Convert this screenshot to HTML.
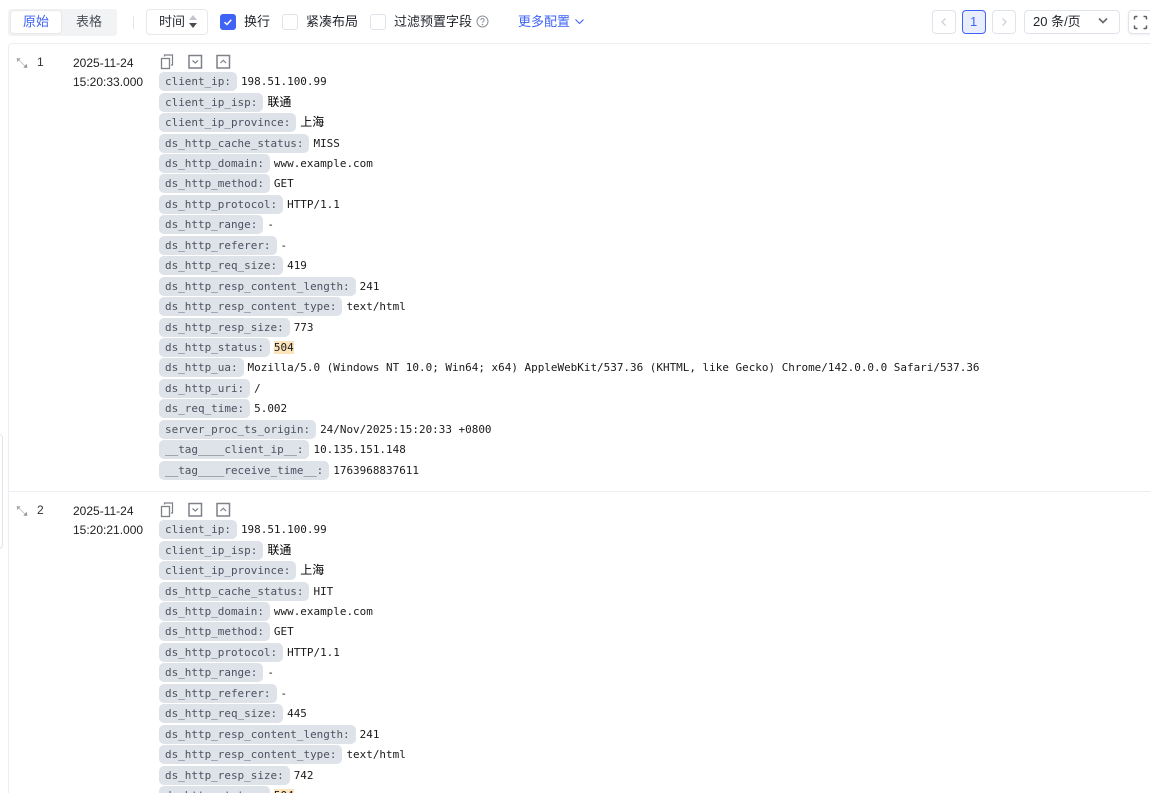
<!DOCTYPE html>
<html><head><meta charset="utf-8">
<style>
html,body{margin:0;padding:0;width:1150px;height:793px;overflow:hidden;background:#fff}
#w{position:relative;width:1150px;height:793px;overflow:hidden;background:#fff;font-family:"Liberation Sans","Noto Sans CJK SC",sans-serif;color:#1f2329;font-size:13px}
.a{position:absolute}
.t{position:absolute;white-space:nowrap;line-height:18px}
.box{position:absolute;box-sizing:border-box;border:1px solid #dfe3ea;border-radius:3px;background:#fff}
.rec{position:absolute;left:159px;font-family:"DejaVu Sans Mono","Noto Sans CJK SC",monospace;font-size:10.96px;color:#1a1a1a}
.l{height:20.45px;white-space:nowrap;line-height:19px}
.c{display:inline-block;height:19px;line-height:19px;padding:0 6px;margin-right:4px;background:#dee2e9;border-radius:5px;color:#4a5361}
.z{font-family:"WenQuanYi Zen Hei","Noto Sans CJK SC",sans-serif;font-size:12px;line-height:0;color:#000}
.h{background:#fbe3bb}
.d{position:absolute;left:73px;font-size:12px;line-height:19px;color:#222;white-space:nowrap}
</style></head><body><div id="w">

<div class="a" style="left:8px;top:9px;width:109px;height:27px;background:#f2f3f5;border-radius:3px"></div>
<div class="a" style="left:11px;top:11px;width:50px;height:22px;background:#fff;border-radius:3px;box-shadow:0 0 2px rgba(0,0,0,.12)"></div>
<div class="t" style="left:23px;top:13px;color:#3f63f5">原始</div>
<div class="t" style="left:76px;top:13px;color:#4a4f57">表格</div>
<div class="a" style="left:133px;top:16px;width:1px;height:13px;background:#e4e6ea"></div>
<div class="box" style="left:146px;top:9px;width:62px;height:26px;border-radius:4px;border-color:#e6e8ec"></div>
<div class="t" style="left:159px;top:13px;color:#2b2f36">时间</div>
<svg class="a" style="left:188px;top:14px" width="10" height="16"><path d="M5 1 9 6H1z" fill="#c2c5cb"/><path d="M5 14 9 9H1z" fill="#4a4d52"/></svg>
<div class="a" style="left:220px;top:14px;width:16px;height:16px;background:#3f63f5;border-radius:3px"></div>
<svg class="a" style="left:220px;top:14px" width="16" height="16"><path d="M4.5 8.2 7 10.5 11.3 5.8" fill="none" stroke="#fff" stroke-width="1.5"/></svg>
<div class="t" style="left:244px;top:13px">换行</div>
<div class="box" style="left:282px;top:14px;width:16px;height:16px"></div>
<div class="t" style="left:306px;top:13px">紧凑布局</div>
<div class="box" style="left:370px;top:14px;width:16px;height:16px"></div>
<div class="t" style="left:394px;top:13px">过滤预置字段</div>
<svg class="a" style="left:476px;top:15px" width="13" height="13"><circle cx="6.5" cy="6.5" r="5.5" fill="none" stroke="#8d9199"/><path d="M4.8 5.2C4.9 3 8.2 3 8.2 5.1 8.2 6.3 6.5 6.4 6.5 7.8" fill="none" stroke="#8d9199"/><circle cx="6.5" cy="9.6" r=".7" fill="#8d9199"/></svg>
<div class="t" style="left:518px;top:13px;color:#3f63f5">更多配置</div>
<svg class="a" style="left:574px;top:18px" width="11" height="8"><path d="M1.5 1.5 5.5 5.5 9.5 1.5" fill="none" stroke="#3f63f5" stroke-width="1.1"/></svg>

<div class="box" style="left:932px;top:10px;width:24px;height:24px;border-radius:4px"></div>
<svg class="a" style="left:940px;top:17px" width="8" height="10"><path d="M5.5 1.5 2 5 5.5 8.5" fill="none" stroke="#c8ccd3" stroke-width="1.2"/></svg>
<div class="box" style="left:962px;top:10px;width:24px;height:24px;border-radius:4px;border-color:#3f63f5;background:#e9eefe"></div>
<div class="t" style="left:970px;top:13px;color:#3f63f5">1</div>
<div class="box" style="left:992px;top:10px;width:24px;height:24px;border-radius:4px"></div>
<svg class="a" style="left:1000px;top:17px" width="8" height="10"><path d="M2.5 1.5 6 5 2.5 8.5" fill="none" stroke="#c8ccd3" stroke-width="1.2"/></svg>
<div class="box" style="left:1024px;top:10px;width:96px;height:24px;border-radius:4px"></div>
<div class="t" style="left:1033px;top:13px">20 条/页</div>
<svg class="a" style="left:1097px;top:17px" width="12" height="8"><path d="M2 1.5 6 5.5 10 1.5" fill="none" stroke="#6a6e75" stroke-width="1.8"/></svg>
<div class="box" style="left:1128px;top:10px;width:30px;height:24px;border-radius:4px;box-shadow:0 1px 2px rgba(0,0,0,.06)"></div>
<svg class="a" style="left:1133px;top:15px" width="15" height="15"><path d="M1.5 4.5V2.5Q1.5 1.5 2.5 1.5H4.5M10.5 1.5H12.5Q13.5 1.5 13.5 2.5V4.5M13.5 10.5V12.5Q13.5 13.5 12.5 13.5H10.5M4.5 13.5H2.5Q1.5 13.5 1.5 12.5V10.5" fill="none" stroke="#5c6066" stroke-width="1.5"/></svg>

<div class="a" style="left:8px;top:43px;width:1160px;height:770px;box-sizing:border-box;border:1px solid #eceef1;border-radius:4px"></div>
<div class="a" style="left:9px;top:491px;width:1141px;height:1px;background:#eceef1"></div>
<div class="a" style="left:-10px;top:434px;width:13px;height:115px;box-sizing:border-box;border:1px solid #dfe3ea;border-radius:4px"></div>

<svg class="a" style="left:16px;top:57px" width="12" height="12"><path d="M1 1.5 4 1.5 1.5 4.5Z" fill="#a0a4ab" stroke="#a0a4ab" stroke-width=".6"/><path d="M11 10.5 8 10.5 10.5 7.5Z" fill="#8f939a" stroke="#8f939a" stroke-width=".6"/><path d="M3 3 9 9" stroke="#b4b7bd" stroke-width=".8"/></svg>
<div class="t" style="left:37px;top:53px;font-size:12px;color:#333">1</div>
<div class="d" style="top:54px">2025-11-24<br>15:20:33.000</div>
<svg class="a" style="left:160px;top:54px" width="72" height="16" fill="none" stroke="#7d8189"><rect x="1.5" y="4.5" width="8" height="10" stroke-width="1.3"/><path d="M4.5 2.5V1H12.5V11H11" stroke-width="1.2"/><rect x="29" y="1.5" width="12.5" height="12.5" stroke-width="1.5"/><path d="M32.5 6.5 35.3 9 38 6.5" stroke-width="1.2"/><rect x="57" y="1.5" width="12.5" height="12.5" stroke-width="1.5"/><path d="M60.5 9 63.3 6.3 66 9" stroke-width="1.2"/></svg>
<div class="rec" style="top:72.25px">
<div class="l"><span class="c">client_ip:</span>198.51.100.99</div>
<div class="l"><span class="c">client_ip_isp:</span><span class="z">联通</span></div>
<div class="l"><span class="c">client_ip_province:</span><span class="z">上海</span></div>
<div class="l"><span class="c">ds_http_cache_status:</span>MISS</div>
<div class="l"><span class="c">ds_http_domain:</span>www.example.com</div>
<div class="l"><span class="c">ds_http_method:</span>GET</div>
<div class="l"><span class="c">ds_http_protocol:</span>HTTP/1.1</div>
<div class="l"><span class="c">ds_http_range:</span>-</div>
<div class="l"><span class="c">ds_http_referer:</span>-</div>
<div class="l"><span class="c">ds_http_req_size:</span>419</div>
<div class="l"><span class="c">ds_http_resp_content_length:</span>241</div>
<div class="l"><span class="c">ds_http_resp_content_type:</span>text/html</div>
<div class="l"><span class="c">ds_http_resp_size:</span>773</div>
<div class="l"><span class="c">ds_http_status:</span><span class="h">504</span></div>
<div class="l"><span class="c">ds_http_ua:</span>Mozilla/5.0 (Windows NT 10.0; Win64; x64) AppleWebKit/537.36 (KHTML, like Gecko) Chrome/142.0.0.0 Safari/537.36</div>
<div class="l"><span class="c">ds_http_uri:</span>/</div>
<div class="l"><span class="c">ds_req_time:</span>5.002</div>
<div class="l"><span class="c">server_proc_ts_origin:</span>24/Nov/2025:15:20:33 +0800</div>
<div class="l"><span class="c">__tag____client_ip__:</span>10.135.151.148</div>
<div class="l"><span class="c">__tag____receive_time__:</span>1763968837611</div>
</div>

<svg class="a" style="left:16px;top:505px" width="12" height="12"><path d="M1 1.5 4 1.5 1.5 4.5Z" fill="#a0a4ab" stroke="#a0a4ab" stroke-width=".6"/><path d="M11 10.5 8 10.5 10.5 7.5Z" fill="#8f939a" stroke="#8f939a" stroke-width=".6"/><path d="M3 3 9 9" stroke="#b4b7bd" stroke-width=".8"/></svg>
<div class="t" style="left:37px;top:501px;font-size:12px;color:#333">2</div>
<div class="d" style="top:502px">2025-11-24<br>15:20:21.000</div>
<svg class="a" style="left:160px;top:502px" width="72" height="16" fill="none" stroke="#7d8189"><rect x="1.5" y="4.5" width="8" height="10" stroke-width="1.3"/><path d="M4.5 2.5V1H12.5V11H11" stroke-width="1.2"/><rect x="29" y="1.5" width="12.5" height="12.5" stroke-width="1.5"/><path d="M32.5 6.5 35.3 9 38 6.5" stroke-width="1.2"/><rect x="57" y="1.5" width="12.5" height="12.5" stroke-width="1.5"/><path d="M60.5 9 63.3 6.3 66 9" stroke-width="1.2"/></svg>
<div class="rec" style="top:520.25px">
<div class="l"><span class="c">client_ip:</span>198.51.100.99</div>
<div class="l"><span class="c">client_ip_isp:</span><span class="z">联通</span></div>
<div class="l"><span class="c">client_ip_province:</span><span class="z">上海</span></div>
<div class="l"><span class="c">ds_http_cache_status:</span>HIT</div>
<div class="l"><span class="c">ds_http_domain:</span>www.example.com</div>
<div class="l"><span class="c">ds_http_method:</span>GET</div>
<div class="l"><span class="c">ds_http_protocol:</span>HTTP/1.1</div>
<div class="l"><span class="c">ds_http_range:</span>-</div>
<div class="l"><span class="c">ds_http_referer:</span>-</div>
<div class="l"><span class="c">ds_http_req_size:</span>445</div>
<div class="l"><span class="c">ds_http_resp_content_length:</span>241</div>
<div class="l"><span class="c">ds_http_resp_content_type:</span>text/html</div>
<div class="l"><span class="c">ds_http_resp_size:</span>742</div>
<div class="l"><span class="c">ds_http_status:</span><span class="h">504</span></div>
</div>
</div></body></html>
